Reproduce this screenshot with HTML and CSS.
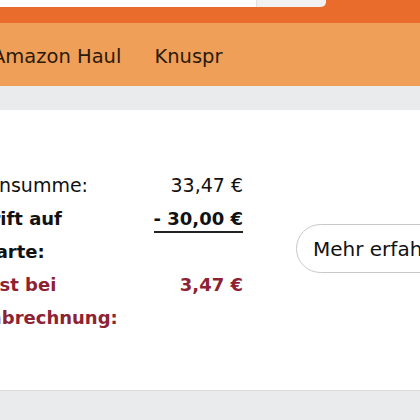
FILE: index.html
```html
<!DOCTYPE html>
<html lang="de">
<head>
  <meta charset="UTF-8" />
  <title>Warenkorb | Geschenkkarte</title>
  <meta name="viewport" content="width=device-width, initial-scale=1.0" />
  <link rel="stylesheet" href="styles.css">
</head>
<body>

  <!-- Top bar with search -->
  <header class="topbar">
    <div class="search">
      <div class="search-input"></div>
      <div class="search-btn"></div>
    </div>
  </header>

  <nav class="nav">
    <a class="nav-link first" href="#">Amazon Haul</a>
    <a class="nav-link" href="#">Knuspr</a>
  </nav>

  <div class="subnav"></div>

  <main class="content">
    <div class="summary">
      <div class="label">Zwischensumme:</div>
      <div class="value">33,47 €</div>

      <div class="label bold">Gutschrift auf Kreditkarte:</div>
      <div class="value bold"><span class="minus">- 30,00 €</span></div>

      <div class="label bold red">Dein Rest bei Kartenabrechnung:</div>
      <div class="value bold red">3,47 €</div>
    </div>

    <button class="btn-more">Mehr erfahren</button>
  </main>

  <footer class="footer"></footer>

</body>
</html>
```

FILE: styles.css
```css
/* Reset & base */
* {
  box-sizing: border-box;
}
body, html {
  margin: 0; padding: 0; height: 100%;
  font-family: 'DejaVu Sans', Verdana, sans-serif;
  background: #fff;
  color: #111;
  overflow: hidden;
}
body {
  display: flex;
  flex-direction: column;
}

/* Top bar */
.topbar {
  height: 23px;
  background: #ea6c2d;
  flex-shrink: 0;
}
.search {
  display: flex;
  width: 326px;
  height: 7px;
}
.search-input {
  flex: 1;
  background: #fff;
}
.search-btn {
  width: 70px;
  background: #f1f1f1;
  border-bottom-right-radius: 5px;
  border-left: 1px solid #e2e2e2;
}

/* Orange nav */
.nav {
  height: 63px;
  background: #f09f58;
  display: flex;
  align-items: center;
  gap: 33px;
  flex-shrink: 0;
  padding-top: 3px;
}
.nav-link {
  color: #2a1a0c;
  text-decoration: none;
  font-size: 19.5px;
}
.nav-link.first {
  margin-left: -8px;
}

.subnav {
  height: 24px;
  background: #e9ebec;
  flex-shrink: 0;
}

/* Main content */
.content {
  height: 280px;
  flex-shrink: 0;
  display: flex;
  align-items: flex-start;
  padding-top: 59px;
}

.summary {
  margin-left: -79px;
  display: grid;
  grid-template-columns: 232px 90px;
  font-size: 19px;
  line-height: 33px;
}
.value {
  text-align: right;
  white-space: nowrap;
}
.bold {
  font-weight: bold;
  font-size: 18px;
}
.red {
  color: #8d2332;
}
.minus {
  display: inline-block;
  line-height: 24px;
  border-bottom: 2px solid #222;
}

/* Pill button */
.btn-more {
  margin-left: 53px;
  margin-top: 55px;
  height: 49px;
  padding: 0 20px 0 16px;
  border: 1px solid #c9c9c9;
  border-radius: 25px;
  background: #fff;
  font-family: inherit;
  font-size: 20px;
  color: #111;
  white-space: nowrap;
  flex-shrink: 0;
}

/* Footer */
.footer {
  flex: 1;
  background: #e9ebec;
  border-top: 1px solid #dcdddd;
}
```
